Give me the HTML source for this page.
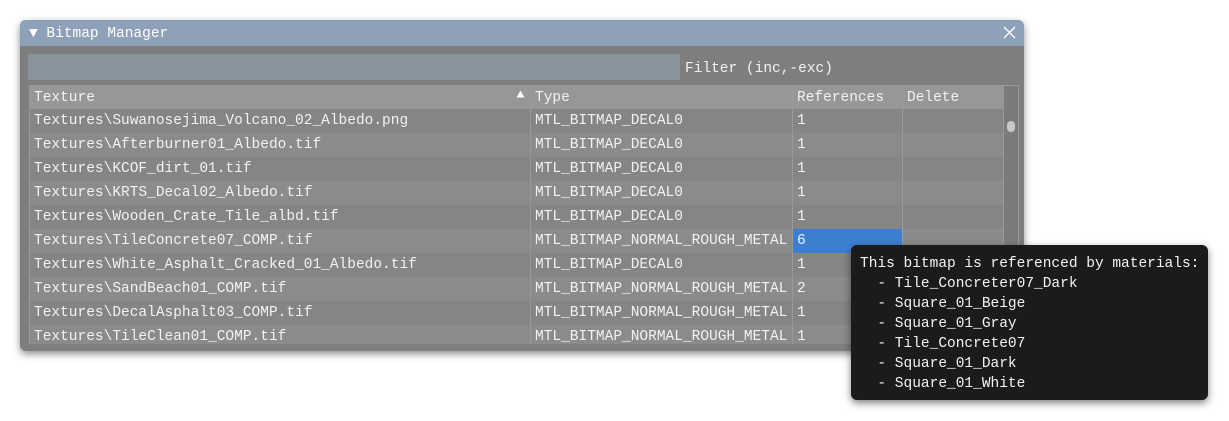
<!DOCTYPE html>
<html><head><style>
body{margin:0;width:1229px;height:421px;background:#fff;position:relative;overflow:hidden;font-family:"Liberation Mono","DejaVu Sans Mono",monospace;font-size:14.5px;color:#f2f2f2}
.win{position:absolute;left:20px;top:20px;width:1004px;height:331px;background:#7e7e7e;border-radius:6px;box-shadow:0 3px 8px rgba(0,0,0,.45);overflow:hidden}
.title{position:absolute;left:0;top:0;right:0;height:26px;background:#8fa0b9;color:#fff}
.title span{position:absolute;left:9px;top:6px}
.filter{position:absolute;left:8px;top:34px;width:652px;height:26px;background:#89939d}
.flabel{position:absolute;left:665px;top:41px}
.tbl{position:absolute;left:9px;top:65px;width:988px;height:258px;overflow:hidden;border:1px solid #9a9a9a;border-bottom:none}
.row{position:absolute;left:0;width:974px;height:24px;line-height:24px}
.c{position:absolute;top:0;height:24px;padding-left:4px;border-right:1px solid #9a9a9a;box-sizing:border-box;white-space:nowrap}
.c1{left:0;width:501px}.c2{left:501px;width:262px}.c3{left:763px;width:110px}.c4{left:873px;width:101px}
.sb{position:absolute;left:974px;top:0;width:14px;height:258px;background:#7b7b7b}
.thumb{position:absolute;left:977px;top:35px;width:8px;height:11px;background:#c9c9c9;border-radius:4px}
.tip{position:absolute;left:851px;top:245px;width:357px;height:155px;background:#1b1b1c;border-radius:6px;box-shadow:0 3px 8px rgba(0,0,0,.5);color:#f4f4f4}
.tip div{position:absolute;left:9px;white-space:pre}
</style></head><body>
<div class="win">
<div class="title"><span>▼ Bitmap Manager</span>
<svg style="position:absolute;right:8px;top:6px" width="13" height="13"><path d="M1 1L12 12M12 1L1 12" stroke="#fff" stroke-width="1.3"/></svg></div>
<div class="filter"></div>
<div class="flabel">Filter (inc,-exc)</div>
<div class="tbl">
<div class="row" style="top:0;background:#979797;height:23px"><div class="c c1">Texture<svg style="position:absolute;right:5px;top:4px" width="9" height="8"><path d="M0.5 7.5L4.5 0.5L8.5 7.5Z" fill="#fff"/></svg></div><div class="c c2">Type</div><div class="c c3">References</div><div class="c c4">Delete</div></div>
<div class="row" style="top:23px;background:#858585"><div class="c c1">Textures\Suwanosejima_Volcano_02_Albedo.png</div><div class="c c2">MTL_BITMAP_DECAL0</div><div class="c c3">1</div><div class="c c4"></div></div>
<div class="row" style="top:47px;background:#8b8b8b"><div class="c c1">Textures\Afterburner01_Albedo.tif</div><div class="c c2">MTL_BITMAP_DECAL0</div><div class="c c3">1</div><div class="c c4"></div></div>
<div class="row" style="top:71px;background:#858585"><div class="c c1">Textures\KCOF_dirt_01.tif</div><div class="c c2">MTL_BITMAP_DECAL0</div><div class="c c3">1</div><div class="c c4"></div></div>
<div class="row" style="top:95px;background:#8b8b8b"><div class="c c1">Textures\KRTS_Decal02_Albedo.tif</div><div class="c c2">MTL_BITMAP_DECAL0</div><div class="c c3">1</div><div class="c c4"></div></div>
<div class="row" style="top:119px;background:#858585"><div class="c c1">Textures\Wooden_Crate_Tile_albd.tif</div><div class="c c2">MTL_BITMAP_DECAL0</div><div class="c c3">1</div><div class="c c4"></div></div>
<div class="row" style="top:143px;background:#8b8b8b"><div class="c c1">Textures\TileConcrete07_COMP.tif</div><div class="c c2">MTL_BITMAP_NORMAL_ROUGH_METAL</div><div class="c c3" style="background:#3c7fd0">6</div><div class="c c4"></div></div>
<div class="row" style="top:167px;background:#858585"><div class="c c1">Textures\White_Asphalt_Cracked_01_Albedo.tif</div><div class="c c2">MTL_BITMAP_DECAL0</div><div class="c c3">1</div><div class="c c4"></div></div>
<div class="row" style="top:191px;background:#8b8b8b"><div class="c c1">Textures\SandBeach01_COMP.tif</div><div class="c c2">MTL_BITMAP_NORMAL_ROUGH_METAL</div><div class="c c3">2</div><div class="c c4"></div></div>
<div class="row" style="top:215px;background:#858585"><div class="c c1">Textures\DecalAsphalt03_COMP.tif</div><div class="c c2">MTL_BITMAP_NORMAL_ROUGH_METAL</div><div class="c c3">1</div><div class="c c4"></div></div>
<div class="row" style="top:239px;background:#8b8b8b"><div class="c c1">Textures\TileClean01_COMP.tif</div><div class="c c2">MTL_BITMAP_NORMAL_ROUGH_METAL</div><div class="c c3">1</div><div class="c c4"></div></div>
<div class="sb"></div><div class="thumb"></div>
</div>
</div>
<div class="tip">
<div style="top:11px">This bitmap is referenced by materials:</div>
<div style="top:31px">  - Tile_Concreter07_Dark</div>
<div style="top:51px">  - Square_01_Beige</div>
<div style="top:71px">  - Square_01_Gray</div>
<div style="top:91px">  - Tile_Concrete07</div>
<div style="top:111px">  - Square_01_Dark</div>
<div style="top:131px">  - Square_01_White</div>
</div>
</body></html>
